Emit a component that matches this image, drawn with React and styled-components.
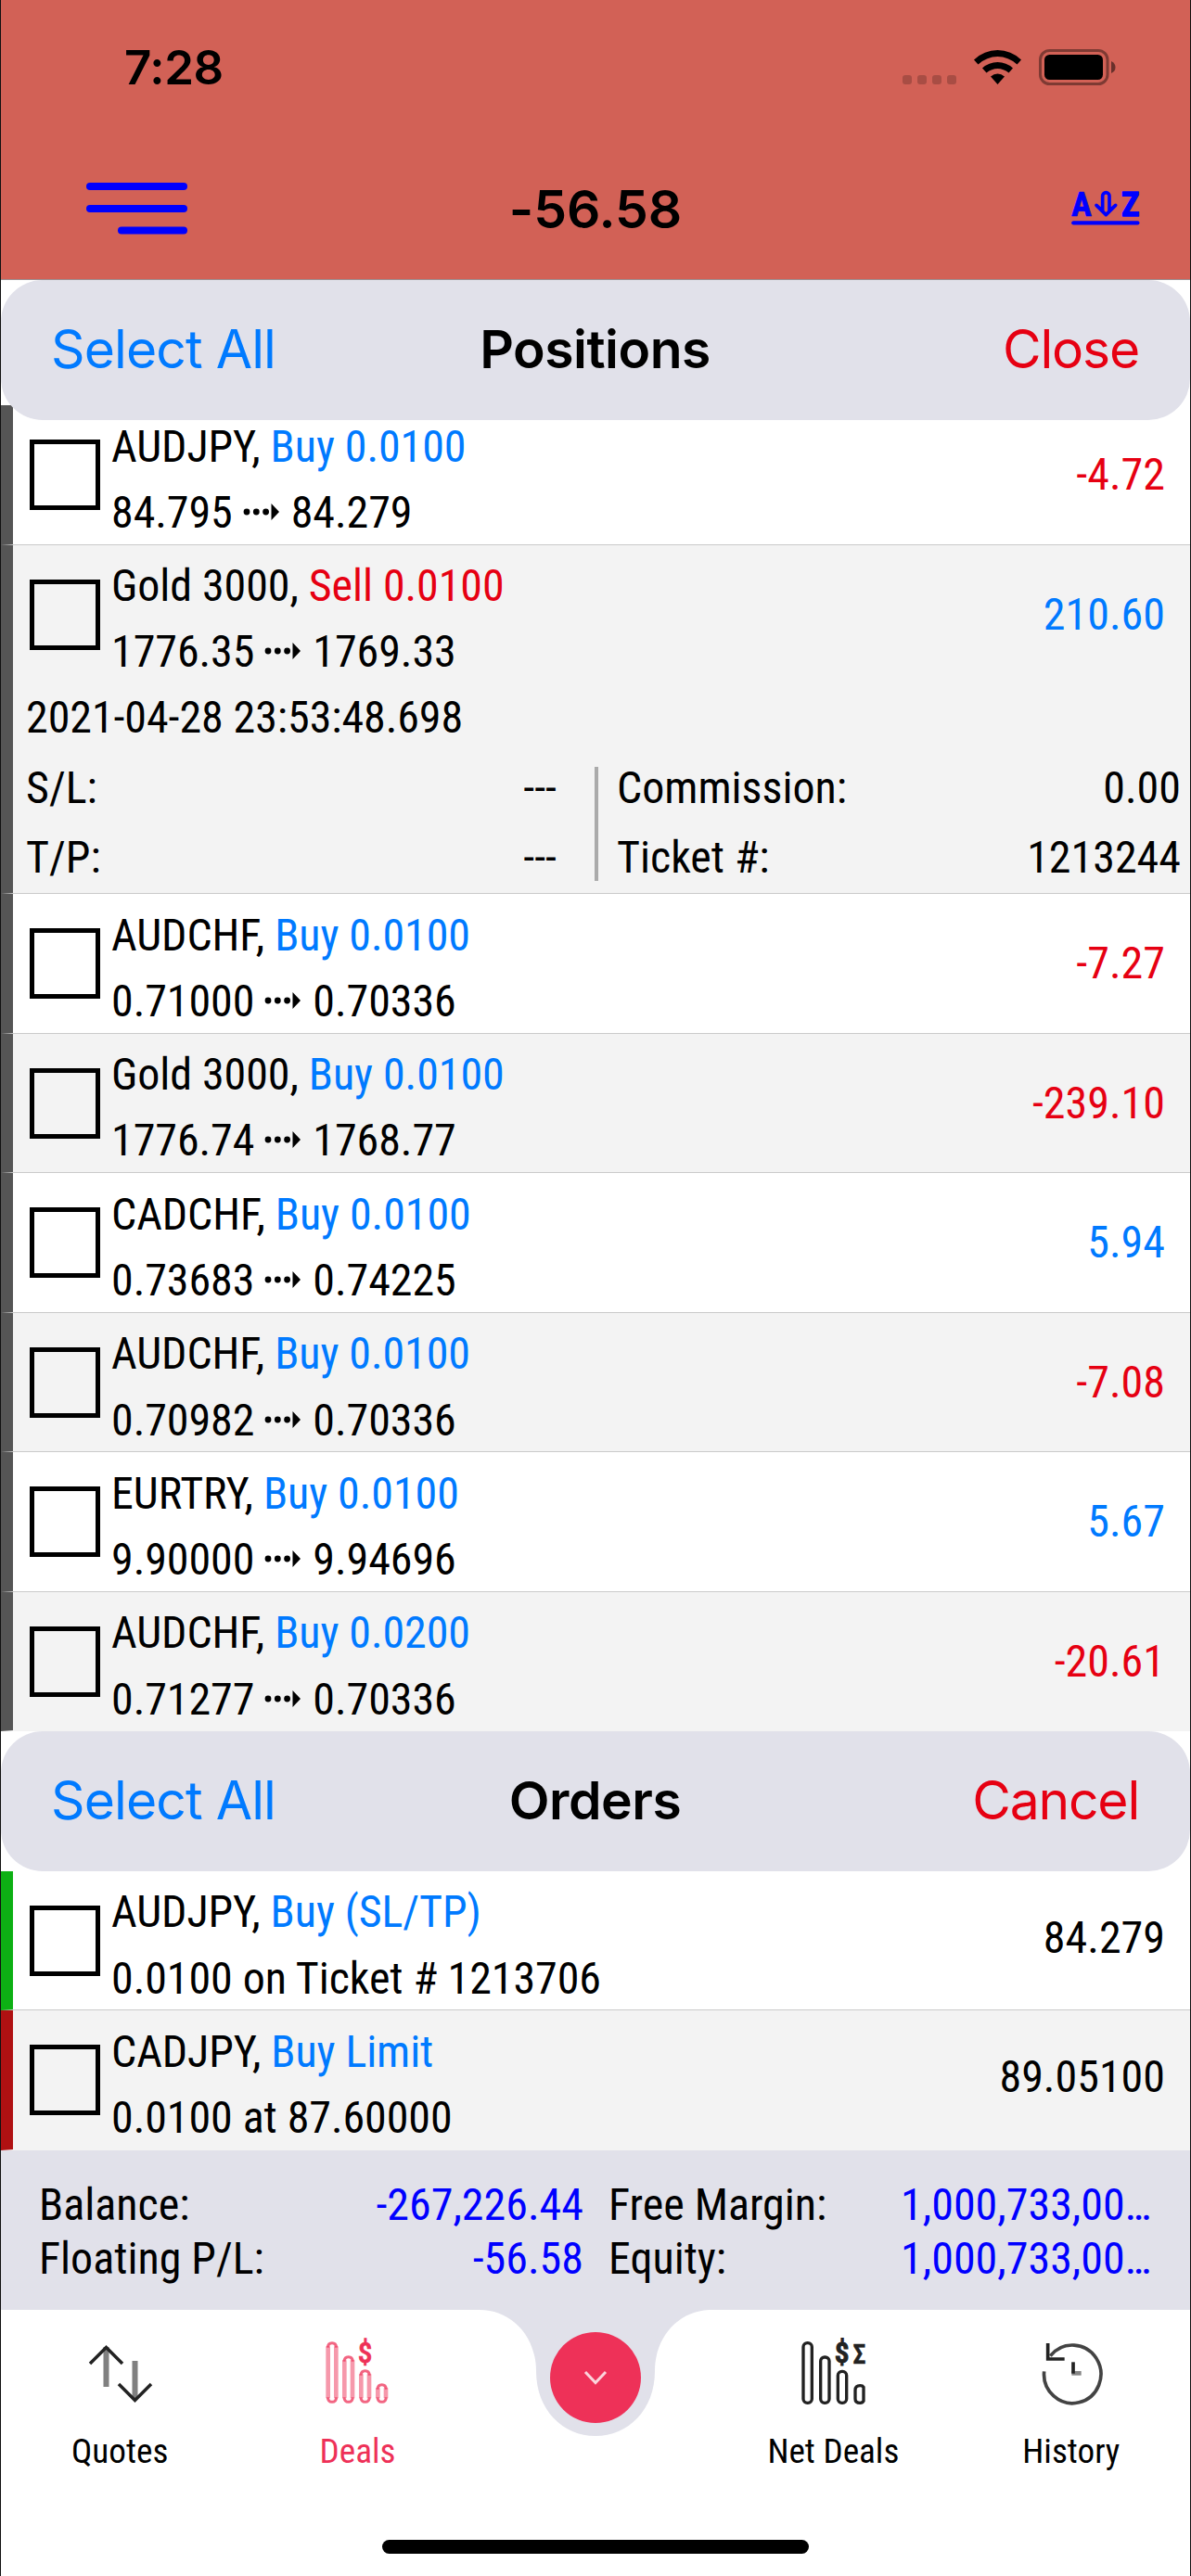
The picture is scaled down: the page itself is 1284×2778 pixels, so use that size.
import React, { useState } from "react";
import styled, { createGlobalStyle } from "styled-components";

const GlobalStyle = createGlobalStyle`
    body {
        margin: 0;
        background: white;
    }
    * {
        box-sizing: border-box;
    }
`
const Screen = styled.div`
    display: flex;
    flex-direction: column;
    width: 1284px;
    height: 2778px;
    overflow: hidden;
    background-color: white;
    border-left: 1px solid #111;
    border-right: 1px solid #111;
    font-family: 'Roboto Condensed', Roboto, sans-serif;
    font-size: 48px;
    color: black;
    white-space: pre;
`
const Header = styled.header`
    height: 302px;
    flex: none;
    background-color: #d26156;
    border-bottom: 1px solid #9c9193;
    font-family: Inter, sans-serif;
    font-weight: 600;
`
const StatusBar = styled.div`
    display: flex;
    align-items: center;
    justify-content: space-between;
    height: 145px;
    padding: 0 80px 0 133px;
`
const Time = styled.span`
    font-size: 51px;
    letter-spacing: -0.4px;
`
const StatusIcons = styled.svg`
    width: 232px;
    height: 40px;
`
const NavBar = styled.div`
    display: grid;
    grid-template-columns: 1fr auto 1fr;
    align-items: center;
    height: 156px;
    padding: 3px 54px 0 92px;
`
const MenuIcon = styled.svg`
    width: 110px;
    height: 56px;
`
const Total = styled.h1`
    margin: 2px 0 0 -38px;
    font-size: 57px;
    font-weight: 600;
    letter-spacing: -0.1px;
`
const SortIcon = styled.svg`
    width: 74px;
    height: 38px;
    justify-self: end;
    overflow: visible;
`
const SectionBar = styled.div`
    position: relative;
    z-index: 1;
    display: grid;
    grid-template-columns: 1fr auto 1fr;
    align-items: center;
    flex: none;
    height: 150.5px;
    padding: 0 55px 2px 54px;
    border-radius: 45px;
    background-color: #e1e1ea;
    font-family: Inter, sans-serif;
    font-size: 57px;
`
const SectionTitle = styled.h2`
    margin: 0;
    font-size: 57px;
    font-weight: 600;
    letter-spacing: -0.5px;
`
const TextButton = styled.button`
    padding: 0;
    border: none;
    background: none;
    font: inherit;
    letter-spacing: ${(props) => props.$danger ? '-1.2px' : '-0.9px'};
    color: ${(props) => props.$danger ? '#e60012' : '#007aff'};
    justify-self: ${(props) => props.$danger ? 'end' : 'start'};
`
const List = styled.div`
    flex: none;
    margin-top: ${(props) => props.$tucked ? '-15.5px' : '0'};
`
const Row = styled.div`
    min-height: 150.55px;
    border-left: 13px solid ${(props) => props.$bar};
    border-bottom: 1px solid ${(props) => props.$last ? 'transparent' : '#cacaca'};
    background-color: ${(props) => props.$shaded ? '#f3f3f3' : 'white'};
`
const RowMain = styled.div`
    display: flex;
    height: 149.55px;
    padding: 0 27px 0 18px;
`
const CheckBox = styled.button`
    width: 76px;
    height: 76px;
    margin: 37px 12px 0 0;
    padding: 0;
    border: 5px solid black;
    border-radius: 0;
    background: ${(props) => props.$checked ? 'black' : 'none'};
    background-clip: content-box;
`
const RowText = styled.div`
    flex: 1;
    padding-top: 8.5px;
    line-height: 71.3px;
    letter-spacing: -0.07px;
`
const Side = styled.span`
    color: ${(props) => props.$sell ? '#e60012' : '#007aff'};
`
const ArrowIcon = styled.svg`
    width: 42px;
    height: 20px;
    margin: 0 11px 0 10px;
    vertical-align: 7px;
`
const Value = styled.div`
    line-height: ${(props) => props.$order ? 144 : 150}px;
    color: ${(props) => props.$color || 'black'};
`
const OpenTime = styled.div`
    padding: 1px 0 3px 14px;
    line-height: 71px;
    letter-spacing: -0.07px;
`
const Details = styled.div`
    display: grid;
    grid-template-columns: 627px 1fr;
    height: 151px;
`
const DetailColumn = styled.div`
    flex: 1;
    padding: ${(props) => props.$right ? '0 10px 0 20px' : '0 41px 0 14px'};
    line-height: 75px;
`
const Divided = styled.div`
    display: flex;
`
const Divider = styled.div`
    width: 4px;
    height: 123px;
    margin-top: 15px;
    background-color: #aaa;
`
const Pair = styled.div`
    display: flex;
    justify-content: space-between;
`
const Summary = styled.section`
    display: grid;
    grid-template-columns: 587px 585px;
    column-gap: 27px;
    align-content: start;
    flex: none;
    height: 172px;
    padding: 30px 0 0 41px;
    line-height: 58px;
    background-color: #e1e1ea;
`
const Amount = styled.span`
    color: #0000ff;
`
const TabBar = styled.nav`
    position: relative;
    display: grid;
    grid-template-columns: repeat(5, 1fr);
    flex: none;
    height: 248px;
`
const Notch = styled.svg`
    position: absolute;
    top: 0;
    left: 516px;
    width: 250px;
    height: 137px;
`
const Tab = styled.a`
    position: relative;
    display: flex;
    flex-direction: column;
    align-items: center;
    font-size: 37.2px;
    line-height: 46px;
    color: ${(props) => props.$active ? '#ee3158' : 'black'};

    svg {
        width: 70px;
        height: 70px;
        margin: 34px 0 25px;
        overflow: visible;
    }
`
const RoundButton = styled.button`
    position: relative;
    justify-self: center;
    display: flex;
    justify-content: center;
    align-items: center;
    width: 98px;
    height: 98px;
    margin-top: 24px;
    padding: 0;
    border: none;
    border-radius: 50%;
    background-color: #ee3158;
`
const HomeIndicator = styled.div`
    align-self: center;
    width: 460px;
    height: 15px;
    border-radius: 8px;
    background-color: black;
`

const BLUE = '#007aff';
const RED = '#e60012';

const positions = [
    { symbol: 'AUDJPY', side: 'Buy', volume: '0.0100', open: '84.795', current: '84.279', profit: '-4.72' },
    {
        symbol: 'Gold 3000', side: 'Sell', volume: '0.0100', open: '1776.35', current: '1769.33', profit: '210.60',
        details: { time: '2021-04-28 23:53:48.698', sl: '---', tp: '---', commission: '0.00', ticket: '1213244' },
    },
    { symbol: 'AUDCHF', side: 'Buy', volume: '0.0100', open: '0.71000', current: '0.70336', profit: '-7.27' },
    { symbol: 'Gold 3000', side: 'Buy', volume: '0.0100', open: '1776.74', current: '1768.77', profit: '-239.10' },
    { symbol: 'CADCHF', side: 'Buy', volume: '0.0100', open: '0.73683', current: '0.74225', profit: '5.94' },
    { symbol: 'AUDCHF', side: 'Buy', volume: '0.0100', open: '0.70982', current: '0.70336', profit: '-7.08' },
    { symbol: 'EURTRY', side: 'Buy', volume: '0.0100', open: '9.90000', current: '9.94696', profit: '5.67' },
    { symbol: 'AUDCHF', side: 'Buy', volume: '0.0200', open: '0.71277', current: '0.70336', profit: '-20.61' },
];

const orders = [
    { symbol: 'AUDJPY', type: 'Buy (SL/TP)', note: '0.0100 on Ticket # 1213706', price: '84.279', bar: '#0db014' },
    { symbol: 'CADJPY', type: 'Buy Limit', note: '0.0100 at 87.60000', price: '89.05100', bar: '#b01112' },
];

function Check() {
    const [checked, setChecked] = useState(false);
    return <CheckBox $checked={checked} onClick={() => {setChecked(!checked)}} />;
}

function Arrow() {
    return (
        <ArrowIcon viewBox="0 0 42 20">
            <circle cx="5" cy="10" r="3.4" />
            <circle cx="15.3" cy="10" r="3.4" />
            <circle cx="25.6" cy="10" r="3.4" />
            <path d="M31.5 1 L40 10 L31.5 19 Z" />
        </ArrowIcon>
    );
}

function Position({ data, shaded, last }) {
    return (
        <Row $bar="#555" $shaded={shaded} $last={last}>
            <RowMain>
                <Check />
                <RowText>
                    <div>{data.symbol}, <Side $sell={data.side === 'Sell'}>{data.side} {data.volume}</Side></div>
                    <div>{data.open}<Arrow />{data.current}</div>
                </RowText>
                <Value $color={data.profit.startsWith('-') ? RED : BLUE}>{data.profit}</Value>
            </RowMain>
            {data.details && (
                <>
                    <OpenTime>{data.details.time}</OpenTime>
                    <Details>
                        <DetailColumn>
                            <Pair><span>S/L:</span><span>{data.details.sl}</span></Pair>
                            <Pair><span>T/P:</span><span>{data.details.tp}</span></Pair>
                        </DetailColumn>
                        <Divided>
                            <Divider />
                            <DetailColumn $right>
                                <Pair><span>Commission:</span><span>{data.details.commission}</span></Pair>
                                <Pair><span>Ticket #:</span><span>{data.details.ticket}</span></Pair>
                            </DetailColumn>
                        </Divided>
                    </Details>
                </>
            )}
        </Row>
    );
}

function Order({ data, shaded, last }) {
    return (
        <Row $bar={data.bar} $shaded={shaded} $last={last}>
            <RowMain>
                <Check />
                <RowText>
                    <div>{data.symbol}, <Side>{data.type}</Side></div>
                    <div>{data.note}</div>
                </RowText>
                <Value $order>{data.price}</Value>
            </RowMain>
        </Row>
    );
}

// each bar is a pill: soft sides, solid caps
function DealsIcon() {
    const bars = [[0, 0], [53, 45], [107, 90], [161, 135]];
    return (
        <svg viewBox="0 0 210 210" fill="none" stroke="currentColor">
            {bars.map(([x, y]) => (
                <g key={x}>
                    <path d={`M${x + 8} ${y + 16} V184 M${x + 34} ${y + 16} V184`} strokeWidth="14" opacity="0.5" />
                    <path d={`M${x + 7} ${y + 20} Q${x + 8} ${y + 5} ${x + 21} ${y + 5} T${x + 35} ${y + 20}`} strokeWidth="9" opacity="0.75" />
                    <path d={`M${x + 7} 181 Q${x + 8} 196 ${x + 21} 196 T${x + 35} 181`} strokeWidth="9" opacity="0.75" />
                </g>
            ))}
            <text x="128" y="70" textAnchor="middle" fontSize="94" fontWeight="500" fill="currentColor" strokeWidth="2">$</text>
        </svg>
    );
}

function NetDealsIcon() {
    return (
        <svg viewBox="-4 0 210 210" fill="none" stroke="#222" strokeWidth="10">
            <rect x="5" y="5" width="28" height="194" rx="13" />
            <rect x="61" y="51" width="28" height="148" rx="13" />
            <rect x="117" y="97" width="28" height="102" rx="13" />
            <path d="M200 148 Q197 143 189 143 Q173 143 173 158 V186 Q173 199 189 199 Q197 199 200 193 Z" />
            <text x="130" y="70" textAnchor="middle" fontSize="94" fontWeight="600" fill="#222" strokeWidth="3">$</text>
            <text x="186" y="71" textAnchor="middle" fontSize="86" fontWeight="600" fill="#222" strokeWidth="1">Σ</text>
        </svg>
    );
}

function App() {
    return (
        <Screen>
            <GlobalStyle />
            <Header>
                <StatusBar>
                    <Time>7:28</Time>
                    <StatusIcons viewBox="971 53 232 40">
                        {[973, 989, 1005, 1021].map((x) => (
                            <rect key={x} x={x} y="81" width="10" height="10" rx="3" fillOpacity="0.2" />
                        ))}
                        <path d="M1050 64.500 Q1061 54 1075.500 54 T1101 64.500 L1096.500 69.500 Q1087 61 1075.500 61 T1054.500 69.500 Z" />
                        <path d="M1059 73.500 Q1066 67 1075.500 67 T1092 73.500 L1087.500 78.500 Q1082 74 1075.500 74 T1063.500 78.500 Z" />
                        <path d="M1068 82.500 Q1071.500 79.500 1075.500 79.500 T1083 82.500 L1075.500 91 Z" />
                        <rect x="1121.500" y="54.500" width="72.500" height="36" rx="10" fill="none" stroke="black" strokeOpacity="0.4" strokeWidth="3" />
                        <rect x="1126" y="59" width="63" height="27" rx="5.500" />
                        <path d="M1198 66 Q1202.500 68 1202.500 72.500 T1198 79 Z" fillOpacity="0.5" />
                    </StatusIcons>
                </StatusBar>
                <NavBar>
                    <MenuIcon viewBox="0 0 110 56" fill="#0000ff">
                        <rect x="0" y="0" width="109" height="8" rx="4" />
                        <rect x="0" y="24" width="109" height="8" rx="4" />
                        <rect x="34" y="47.500" width="75" height="8" rx="4" />
                    </MenuIcon>
                    <Total>-56.58</Total>
                    <SortIcon viewBox="0 0 222 114" stroke="#0000ff" strokeWidth="11" strokeLinecap="round" strokeLinejoin="round">
                        <text x="33" y="82" textAnchor="middle" fontFamily="Roboto Condensed" fontSize="110" fontWeight="700" fill="#0000ff" strokeWidth="2">A</text>
                        <text x="191" y="82" textAnchor="middle" fontFamily="Roboto Condensed" fontSize="110" fontWeight="700" fill="#0000ff" strokeWidth="4">Z</text>
                        <path d="M81 46 L101 64 V16 A11 11 0 0 1 123 16 V64 L143 46 L112 77 Z" fill="none" />
                        <path d="M7 103 H214" strokeWidth="13" />
                    </SortIcon>
                </NavBar>
            </Header>

            <SectionBar>
                <TextButton>Select All</TextButton>
                <SectionTitle>Positions</SectionTitle>
                <TextButton $danger>Close</TextButton>
            </SectionBar>
            <List $tucked>
                {positions.map((data, i) => (
                    <Position key={i} data={data} shaded={i % 2 === 1} last={i === positions.length - 1} />
                ))}
            </List>

            <SectionBar>
                <TextButton>Select All</TextButton>
                <SectionTitle>Orders</SectionTitle>
                <TextButton $danger>Cancel</TextButton>
            </SectionBar>
            <List>
                {orders.map((data, i) => (
                    <Order key={i} data={data} shaded={i % 2 === 1} last={i === orders.length - 1} />
                ))}
            </List>

            <Summary>
                <Pair><span>Balance:</span><Amount>-267,226.44</Amount></Pair>
                <Pair><span>Free Margin:</span><Amount>1,000,733,00…</Amount></Pair>
                <Pair><span>Floating P/L:</span><Amount>-56.58</Amount></Pair>
                <Pair><span>Equity:</span><Amount>1,000,733,00…</Amount></Pair>
            </Summary>

            <TabBar>
                <Notch viewBox="0 0 250 137">
                    <path d="M0 0 C34 0 61 28 61 66 C61 108 90 136 125 136 C160 136 189 108 189 66 C189 28 216 0 250 0 Z" fill="#e1e1ea" />
                </Notch>
                <Tab>
                    <svg viewBox="0 0 70 70" fill="none">
                        <path d="M20.500 6 V49 M51.500 21 V62" stroke="#808080" strokeWidth="6" />
                        <path d="M3 24 L20.500 6.500 L38 24 M34 46 L51.500 63.500 L69 46" stroke="#222" strokeWidth="3.500" />
                    </svg>
                    Quotes
                </Tab>
                <Tab $active>
                    <DealsIcon />
                    Deals
                </Tab>
                <RoundButton>
                    <svg width="30" height="20" viewBox="0 0 30 20" fill="none" stroke="#fbd3db" strokeWidth="3">
                        <path d="M4 4 L15 15.500 L26 4" />
                    </svg>
                </RoundButton>
                <Tab>
                    <NetDealsIcon />
                    Net Deals
                </Tab>
                <Tab>
                    <svg viewBox="-9 0 210 210" fill="none" stroke="#222" strokeWidth="11">
                        <path d="M8 97 A92 94 0 1 0 28 47" strokeOpacity="0.85" />
                        <path d="M20 6 V57 H74" strokeWidth="11" />
                        <path d="M102 67 V104" strokeWidth="11" />
                        <path d="M97 103 H128" strokeWidth="14" strokeOpacity="0.55" />
                    </svg>
                    History
                </Tab>
            </TabBar>
            <HomeIndicator />
        </Screen>
    );
}

export default App;
